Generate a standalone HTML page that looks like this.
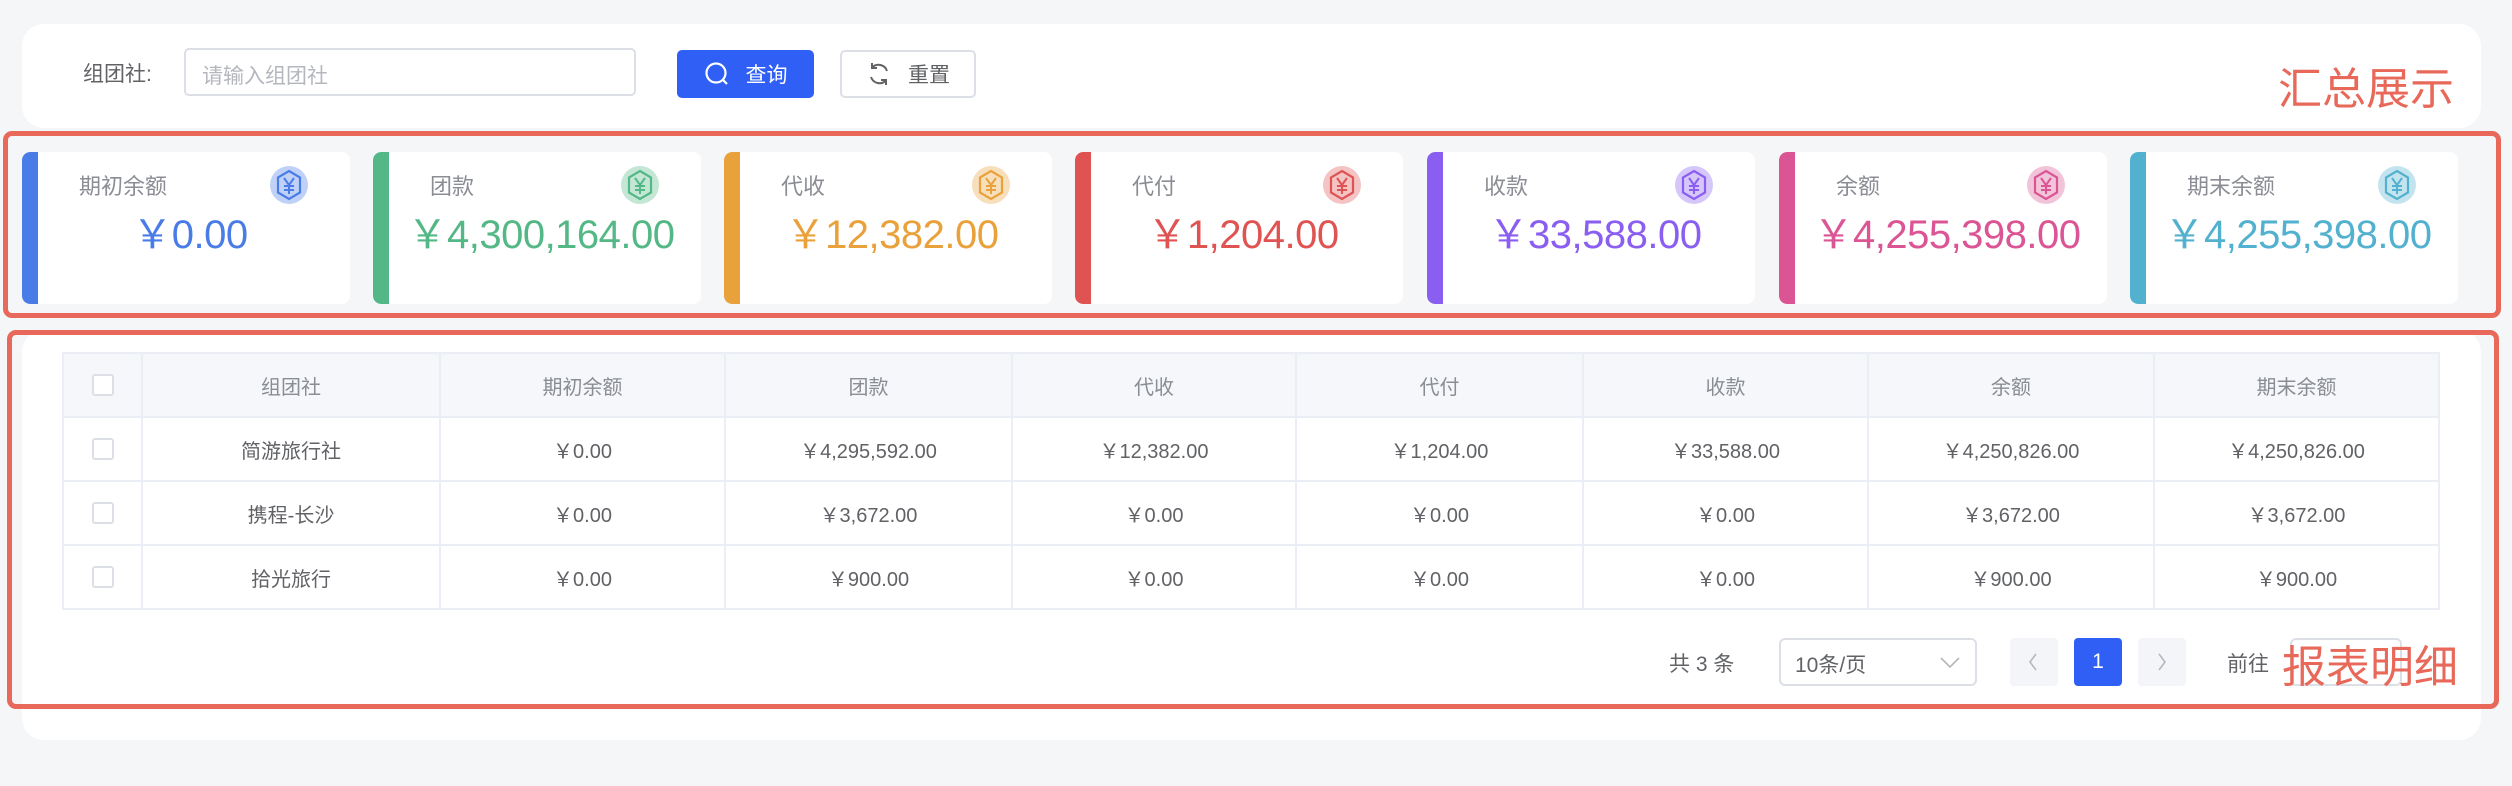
<!DOCTYPE html>
<html><head><meta charset="utf-8"><style>
*{margin:0;padding:0;box-sizing:border-box}
body{width:2512px;height:786px;background:#f5f6f8;position:relative;overflow:hidden;font-family:"Liberation Sans","Noto Sans CJK SC",sans-serif;color:#606266}
.abs{position:absolute}
.card{position:absolute;background:#fff;border-radius:22px}
.redbox{position:absolute;border:5px solid #e8685a;border-radius:9px}
.stat{position:absolute;top:152px;width:328px;height:152px;background:#fff;border-radius:8px;overflow:hidden}
.stat .bar{position:absolute;left:0;top:0;bottom:0;width:16px;border-radius:8px 0 0 8px}
.stat .lab{position:absolute;left:57px;top:17px;font-size:22px;color:#8a8d93}
.stat .ic{position:absolute;left:247px;top:13px;width:40px;height:40px}
.stat .val{position:absolute;left:8px;right:0;top:58px;text-align:center;font-size:40px;line-height:50px;letter-spacing:-0.5px}
table{position:absolute;left:62px;top:352px;border-collapse:collapse;font-size:20px}
td,th{border:2px solid #ebeef5;height:64px;text-align:center;font-weight:normal;color:#606266}
th{background:#f5f7fa;color:#8a8d93}
.cb{display:inline-block;width:22px;height:22px;border:2px solid #dcdfe6;border-radius:3px;vertical-align:middle;background:#fff}
.btn{position:absolute;border-radius:5px;font-size:21px;display:flex;align-items:center;justify-content:center;gap:16px}
</style></head><body>
<div class="card" style="left:22px;top:24px;width:2459px;height:104px"></div>
<div class="card" style="left:22px;top:330px;width:2459px;height:410px"></div>
<div class="abs" style="left:83px;top:58px;font-size:21px;color:#606266">组团社:</div>
<div class="abs" style="left:184px;top:48px;width:452px;height:48px;border:2px solid #dcdfe6;border-radius:5px;font-size:21px;color:#b4b7bd;padding:10px 0 0 16px">请输入组团社</div>
<div class="btn" style="left:677px;top:50px;width:137px;height:48px;background:#2f5ff5;color:#fff"><svg width="26" height="26" viewBox="0 0 26 26" fill="none" stroke="#fff" stroke-width="2.2"><circle cx="12" cy="12" r="9.5"/><path d="M19 19l4 4"/></svg>查询</div>
<div class="btn" style="left:840px;top:50px;width:136px;height:48px;border:2px solid #dcdfe6;color:#606266"><svg width="26" height="26" viewBox="0 0 26 26" fill="none" stroke="#606266" stroke-width="2"><path d="M21 10A9 9 0 0 0 6 6.5M5 16a9 9 0 0 0 15 3.5"/><path d="M6 2v5h5M20 24v-5h-5"/></svg>重置</div>
<div class="abs" style="left:2278px;top:53px;font-size:44px;color:#e8685a">汇总展示</div>

<div class="redbox" style="left:3px;top:131px;width:2498px;height:187px"></div>
<div class="redbox" style="left:7px;top:330px;width:2492px;height:379px"></div>

<div class="stat" style="left:22px"><div class="bar" style="background:#4a7ce8"></div><div class="lab">期初余额</div><svg class="ic" viewBox="0 0 40 40"><circle cx="20" cy="20" r="19" fill="#4a7ce8" opacity=".35"/><path d="M20 6l11 6.5v15L20 34 9 27.5v-15z" fill="none" stroke="#4a7ce8" stroke-width="2.2"/><path d="M15 13l5 7 5-7M20 20v9M15 21h10M15 25h10" fill="none" stroke="#4a7ce8" stroke-width="2"/></svg><div class="val" style="color:#4a7ce8">￥0.00</div></div>
<div class="stat" style="left:373px"><div class="bar" style="background:#54b886"></div><div class="lab">团款</div><svg class="ic" viewBox="0 0 40 40"><circle cx="20" cy="20" r="19" fill="#54b886" opacity=".35"/><path d="M20 6l11 6.5v15L20 34 9 27.5v-15z" fill="none" stroke="#54b886" stroke-width="2.2"/><path d="M15 13l5 7 5-7M20 20v9M15 21h10M15 25h10" fill="none" stroke="#54b886" stroke-width="2"/></svg><div class="val" style="color:#54b886">￥4,300,164.00</div></div>
<div class="stat" style="left:724px"><div class="bar" style="background:#e9a23b"></div><div class="lab">代收</div><svg class="ic" viewBox="0 0 40 40"><circle cx="20" cy="20" r="19" fill="#e9a23b" opacity=".35"/><path d="M20 6l11 6.5v15L20 34 9 27.5v-15z" fill="none" stroke="#e9a23b" stroke-width="2.2"/><path d="M15 13l5 7 5-7M20 20v9M15 21h10M15 25h10" fill="none" stroke="#e9a23b" stroke-width="2"/></svg><div class="val" style="color:#e9a23b">￥12,382.00</div></div>
<div class="stat" style="left:1075px"><div class="bar" style="background:#e05353"></div><div class="lab">代付</div><svg class="ic" viewBox="0 0 40 40"><circle cx="20" cy="20" r="19" fill="#e05353" opacity=".35"/><path d="M20 6l11 6.5v15L20 34 9 27.5v-15z" fill="none" stroke="#e05353" stroke-width="2.2"/><path d="M15 13l5 7 5-7M20 20v9M15 21h10M15 25h10" fill="none" stroke="#e05353" stroke-width="2"/></svg><div class="val" style="color:#e05353">￥1,204.00</div></div>
<div class="stat" style="left:1427px"><div class="bar" style="background:#8a5ef0"></div><div class="lab">收款</div><svg class="ic" viewBox="0 0 40 40"><circle cx="20" cy="20" r="19" fill="#8a5ef0" opacity=".35"/><path d="M20 6l11 6.5v15L20 34 9 27.5v-15z" fill="none" stroke="#8a5ef0" stroke-width="2.2"/><path d="M15 13l5 7 5-7M20 20v9M15 21h10M15 25h10" fill="none" stroke="#8a5ef0" stroke-width="2"/></svg><div class="val" style="color:#8a5ef0">￥33,588.00</div></div>
<div class="stat" style="left:1779px"><div class="bar" style="background:#db5594"></div><div class="lab">余额</div><svg class="ic" viewBox="0 0 40 40"><circle cx="20" cy="20" r="19" fill="#db5594" opacity=".35"/><path d="M20 6l11 6.5v15L20 34 9 27.5v-15z" fill="none" stroke="#db5594" stroke-width="2.2"/><path d="M15 13l5 7 5-7M20 20v9M15 21h10M15 25h10" fill="none" stroke="#db5594" stroke-width="2"/></svg><div class="val" style="color:#db5594">￥4,255,398.00</div></div>
<div class="stat" style="left:2130px"><div class="bar" style="background:#52b1cf"></div><div class="lab">期末余额</div><svg class="ic" viewBox="0 0 40 40"><circle cx="20" cy="20" r="19" fill="#52b1cf" opacity=".35"/><path d="M20 6l11 6.5v15L20 34 9 27.5v-15z" fill="none" stroke="#52b1cf" stroke-width="2.2"/><path d="M15 13l5 7 5-7M20 20v9M15 21h10M15 25h10" fill="none" stroke="#52b1cf" stroke-width="2"/></svg><div class="val" style="color:#52b1cf">￥4,255,398.00</div></div>

<table>
<colgroup><col style="width:79px"><col style="width:298px"><col style="width:285px"><col style="width:287px"><col style="width:284px"><col style="width:287px"><col style="width:285px"><col style="width:286px"><col style="width:285px"></colgroup>
<tr><th><span class="cb"></span></th><th>组团社</th><th>期初余额</th><th>团款</th><th>代收</th><th>代付</th><th>收款</th><th>余额</th><th>期末余额</th></tr>
<tr><td><span class="cb"></span></td><td>简游旅行社</td><td>￥0.00</td><td>￥4,295,592.00</td><td>￥12,382.00</td><td>￥1,204.00</td><td>￥33,588.00</td><td>￥4,250,826.00</td><td>￥4,250,826.00</td></tr>
<tr><td><span class="cb"></span></td><td>携程-长沙</td><td>￥0.00</td><td>￥3,672.00</td><td>￥0.00</td><td>￥0.00</td><td>￥0.00</td><td>￥3,672.00</td><td>￥3,672.00</td></tr>
<tr><td><span class="cb"></span></td><td>拾光旅行</td><td>￥0.00</td><td>￥900.00</td><td>￥0.00</td><td>￥0.00</td><td>￥0.00</td><td>￥900.00</td><td>￥900.00</td></tr>
</table>

<div class="abs" style="left:1669px;top:648px;font-size:21px;color:#606266">共 3 条</div>
<div class="abs" style="left:1779px;top:638px;width:198px;height:48px;border:2px solid #dcdfe6;border-radius:6px;font-size:21px;padding:9px 0 0 14px">10条/页<svg style="position:absolute;right:14px;top:16px" width="22" height="14" viewBox="0 0 22 14" fill="none" stroke="#b4b7bd" stroke-width="1.6"><path d="M2 2l9 9 9-9"/></svg></div>
<div class="abs" style="left:2010px;top:638px;width:48px;height:48px;background:#f4f5f8;border-radius:4px"><svg style="position:absolute;left:17px;top:14px" width="12" height="20" viewBox="0 0 12 20" fill="none" stroke="#b4b7bd" stroke-width="1.6"><path d="M9 2L3 10l6 8"/></svg></div>
<div class="abs" style="left:2074px;top:638px;width:48px;height:48px;background:#2f5ff5;border-radius:4px;color:#fff;font-size:21px;text-align:center;line-height:48px">1</div>
<div class="abs" style="left:2138px;top:638px;width:48px;height:48px;background:#f4f5f8;border-radius:4px"><svg style="position:absolute;left:18px;top:14px" width="12" height="20" viewBox="0 0 12 20" fill="none" stroke="#b4b7bd" stroke-width="1.6"><path d="M3 2l6 8-6 8"/></svg></div>
<div class="abs" style="left:2227px;top:648px;font-size:21px;color:#606266">前往</div>
<div class="abs" style="left:2290px;top:638px;width:112px;height:48px;border:2px solid #dcdfe6;border-radius:6px"></div>
<div class="abs" style="left:2282px;top:631px;font-size:44px;color:#e8685a">报表明细</div>
</body></html>
